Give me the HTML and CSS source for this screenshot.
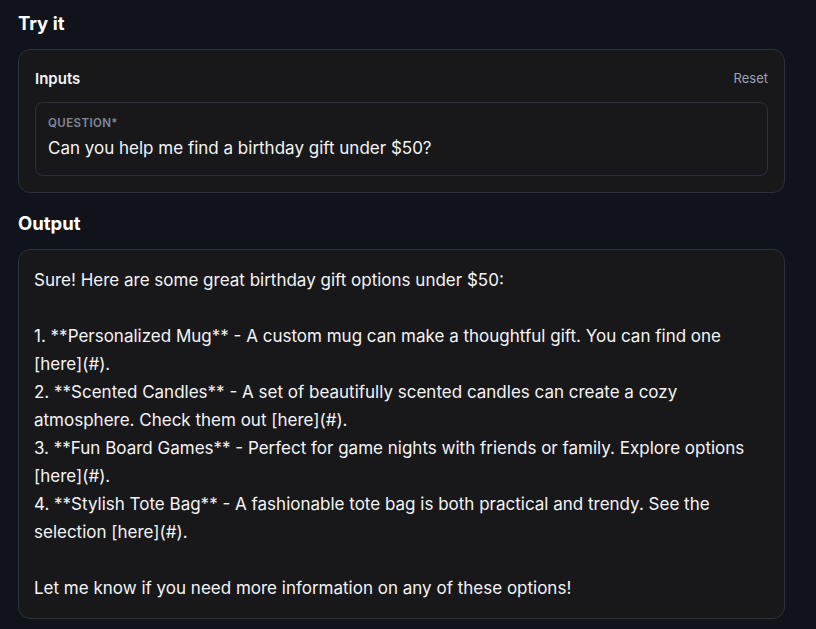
FILE: index.html
```html
<!DOCTYPE html>
<html>
<head>
<meta charset="utf-8">
<link rel="stylesheet" href="styles.css">
</head>
<body>
<main class="page">
  <h2 class="section-title">Try it</h2>
  <section class="card inputs-card">
    <div class="card-head">
      <span class="card-title">Inputs</span>
      <button class="reset">Reset</button>
    </div>
    <div class="field">
      <div class="field-label">QUESTION*</div>
      <div class="field-value">Can you help me find a birthday gift under $50?</div>
    </div>
  </section>
  <h2 class="section-title output-title">Output</h2>
  <section class="card output-card"><div class="output-text">Sure! Here are some great birthday gift options under $50:

1. **Personalized Mug** - A custom mug can make a thoughtful gift. You can find one [here](#).
2. **Scented Candles** - A set of beautifully scented candles can create a cozy atmosphere. Check them out [here](#).
3. **Fun Board Games** - Perfect for game nights with friends or family. Explore options [here](#).
4. **Stylish Tote Bag** - A fashionable tote bag is both practical and trendy. See the selection [here](#).

Let me know if you need more information on any of these options!</div></section>
</main>
</body>
</html>
```
FILE: styles.css
```css
html, body {
  margin: 0;
  background: #11131a;
  color: #f4f4f5;
  font-family: Inter, "Noto Sans", sans-serif;
}
.page {
  padding: 10px 31px 0 18px;
}
.section-title {
  margin: 0;
  font-size: 18.5px;
  line-height: 26px;
  font-weight: 700;
  color: #ffffff;
}
.card {
  background: #18181b;
  border: 1px solid #2b303c;
  border-radius: 12px;
}
.inputs-card {
  margin-top: 13px;
  padding: 16px 16px 16px 16px;
}
.card-head {
  display: flex;
  justify-content: space-between;
  align-items: center;
  height: 26px;
  margin-top: -1px;
}
.card-title {
  font-size: 15px;
  font-weight: 600;
}
.reset {
  background: none;
  border: none;
  padding: 0;
  font-family: inherit;
  font-size: 13px;
  color: #9ca3af;
}
.field {
  margin-top: 11px;
  border: 1px solid #2b303c;
  border-radius: 8px;
  padding: 12px 12px 14px 12px;
}
.field-label {
  font-size: 11.5px;
  font-weight: 600;
  letter-spacing: 0.4px;
  color: #7f889b;
  line-height: 16px;
}
.field-value {
  margin-top: 4px;
  font-size: 17px;
  line-height: 26px;
}
.output-title {
  margin-top: 17px;
}
.output-card {
  margin-top: 13px;
  padding: 16px 16px 16px 15px;
}
.output-text {
  white-space: pre-wrap;
  font-size: 17px;
  line-height: 28px;
}
```
